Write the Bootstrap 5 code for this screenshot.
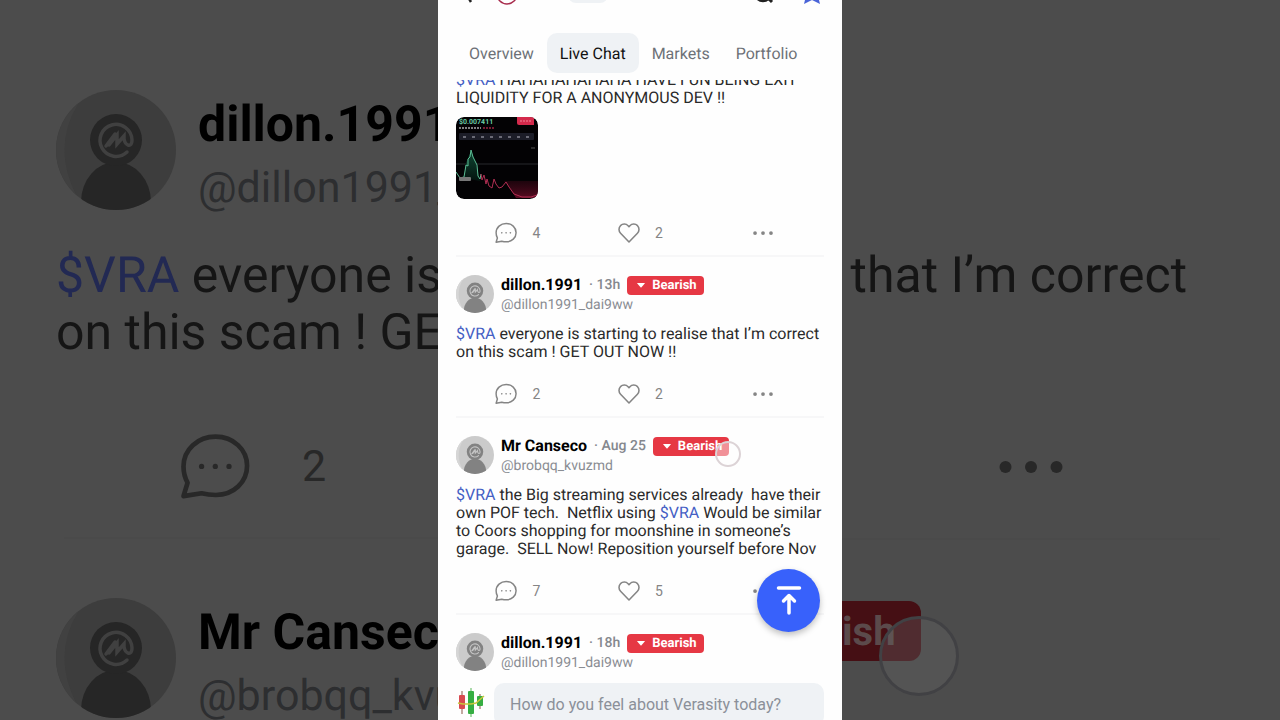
<!DOCTYPE html>
<html lang="en">
<head>
<meta charset="utf-8">
<meta name="viewport" content="width=device-width, initial-scale=1">
<title>Verasity – Live Chat</title>
<link href="https://cdn.jsdelivr.net/npm/bootstrap@5.3.0/dist/css/bootstrap.min.css" rel="stylesheet">
<style>
  body { font-family: Roboto, "Liberation Sans", sans-serif; text-rendering: geometricPrecision; background: #4c4c4c; --av-bg: #cbcbcb; --av-hi: #d6d6d6; --av-fg: #828282; --av-ring: #c4c4c4; }
  button { font-family: inherit; }
  a { text-decoration: none; }
  .stage { height: 100vh; grid-template-columns: minmax(0, 1fr) 404px minmax(0, 1fr); }

  /* phone */
  .phone { background: #fefefe; color: #2a2a2a; }
  .topbar { height: 5px; padding: 0 20px 0 24px; }
  .topbar svg { display: block; }
  .pill { width: 40px; height: 24px; margin-bottom: 2px; background: #eff2f5; border-radius: 8px; }
  .star { margin-left: 28px; }
  .tabs { margin-top: 28px; padding: 0 18px; }
  .tabs .nav-link { padding: 9px 13px 7px; line-height: 24px; color: #6d7177; border-radius: 10px; }
  .tabs .nav-link.active { background: #eff2f5; color: #111; }
  .feed { min-height: 0; margin-top: 7px; padding: 0 18px; }
  .feed-scroll { margin-top: -27px; }
  .post { padding: 18px 0 10px; border-bottom: 2px solid #f7f7f8; }
  .face { width: 38px; height: 38px; }
  .author { margin-left: 7px; margin-bottom: -2px; }
  .who { font-size: 16px; line-height: 20px; font-weight: 700; color: #000; }
  .when { font-size: 14px; line-height: 20px; font-weight: 500; color: #85888e; margin: 0 7px 0 7px; }
  .handle { font-size: 14px; line-height: 20px; color: #8a8d93; }
  .mood { height: 19px; padding: 0 7px 0 10px; gap: 7px; background: #e63844; border-radius: 4px; color: #fff; font-size: 13px; font-weight: 700; line-height: 19px; }
  .msg { font-size: 16px; line-height: 18px; white-space: pre-wrap; margin: 12px 0 21px; }
  .msg a { color: #4560c4; }
  .thumb { width: 82px; height: 82px; border-radius: 8px; margin: 10px 0 22px; }
  .acts button { height: 24px; color: #858585; font-size: 14px; line-height: 24px; gap: 14px; }
  .touch { width: 26px; height: 26px; right: -12px; top: 4px; border: 2px solid #dcd3d6; background: rgba(255,255,255,.45); }
  .fab { width: 63px; height: 63px; right: 22px; bottom: 88px; background: #3861fb; box-shadow: 0 3px 6px rgba(0,0,0,.25); }
  .composer { height: 40px; padding: 3px 18px 0 19px; gap: 8px; background: #fefefe; }
  .composer input { height: 43px; padding: 0 16px; border: 0; border-radius: 10px; background: #eff2f5; font-size: 16px; color: #222; }
  .composer input::placeholder { color: #8b9099; opacity: 1; }

  /* dimmed, enlarged side panels */
  .side { background: #4c4c4c; color: #151515; white-space: nowrap; --av-bg: #3d3d3d; --av-hi: #414141; --av-fg: #262626; --av-ring: #404040; }
  .side .face { width: 120px; height: 120px; }
  .side .author { margin: 2px 0 0 22px; }
  .side .who { font-size: 50px; line-height: 66px; }
  .side .handle { font-size: 43px; line-height: 60px; color: #2d2e30; }
  .side .msg { font-size: 50px; line-height: 57px; white-space: nowrap; margin: 30px 0 70px; }
  .side .msg a { color: #222953; }
  .side .rule { height: 2px; background: #4a4a4a; }
  .left { padding: 90px 0 0 56px; }
  .left .rule { margin: 35px 0 59px 8px; }
  .right { padding: 248px 60px 0 0; }
  .right .msg { margin: 0 33px 156px 0; }
  .right .rule { margin: 65px 0 61px; }
  .big-acts { height: 70px; padding-left: 123px; gap: 51px; color: #282828; font-size: 43px; }
  .big-mood { width: 79px; height: 60px; background: #450f14; color: #5b4a4b; border-radius: 0 12px 12px 0; font-size: 40px; font-weight: 700; line-height: 62px; }
  .big-touch { width: 80px; height: 80px; left: 37px; top: 15px; border: 3px solid #414144; background: rgba(100,100,100,.35); }
</style>
</head>
<body>
<svg width="0" height="0" class="position-absolute" aria-hidden="true">
  <symbol id="face" viewBox="0 0 120 120">
    <clipPath id="round"><circle cx="60" cy="60" r="60"/></clipPath>
    <g clip-path="url(#round)">
      <rect width="120" height="120" fill="var(--av-bg)"/>
      <path d="M22 14Q-6 60 24 112L-8 112V0Z" fill="var(--av-hi)"/>
      <ellipse cx="60" cy="112" rx="35" ry="40" fill="var(--av-fg)"/>
      <circle cx="60" cy="50" r="26" fill="var(--av-fg)"/>
    </g>
    <path d="M71 62A16 16 0 1 1 76 50Q76 56 72 55Q69 54 68 49V46L61 54V45L53 55M50 56L59 44" fill="none" stroke="var(--av-ring)" stroke-width="3.500" stroke-linecap="round"/>
  </symbol>
  <symbol id="chat" viewBox="0 0 24 24">
    <path d="M1.200 22L2.600 17.400Q1.200 14.800 1.200 11.800C1.200 6 6.100 1.600 12.200 1.600S23 6 23 11.600S18.400 21.600 12.300 21.600Q9.700 21.600 7.400 21Z" fill="none" stroke="currentColor" stroke-width="1.600" stroke-linejoin="round"/>
    <g fill="currentColor"><circle cx="7.400" cy="11.800" r=".9"/><circle cx="12.100" cy="11.800" r=".9"/><circle cx="16.800" cy="11.800" r=".9"/></g>
  </symbol>
  <symbol id="heart" viewBox="0 0 24 24">
    <path d="M12 21.800L2.800 12.300C.6 10 .5 6.300 2.700 4C5 1.700 8.800 1.700 11 4L12 5.200L13 4C15.200 1.700 19 1.700 21.300 4C23.500 6.300 23.400 10 21.200 12.300Z" fill="none" stroke="currentColor" stroke-width="1.700" stroke-linejoin="round"/>
  </symbol>
  <symbol id="dots" viewBox="0 0 64 12"><g fill="currentColor"><circle cx="6.500" cy="6" r="6"/><circle cx="32" cy="6" r="6"/><circle cx="57.500" cy="6" r="6"/></g></symbol>
  <symbol id="down" viewBox="0 0 8 5"><path d="M.5 0H7.500Q8 0 7.700.5L4.500 4.300Q4 4.800 3.500 4.300L.3.500Q0 0 .5 0Z" fill="#fff"/></symbol>
</svg>

<div class="stage d-grid overflow-hidden">
  <aside class="side left overflow-hidden">
    <div class="d-flex align-items-start">
      <svg class="face flex-shrink-0"><use href="#face"/></svg>
      <div class="author"><div class="who">dillon.1991</div><div class="handle">@dillon1991_dai9ww</div></div>
    </div>
    <p class="msg"><a href="#">$VRA</a> everyone is<br>on this scam ! GET</p>
    <div class="big-acts d-flex align-items-center">
      <svg width="72" height="70"><use href="#chat"/></svg><span>2</span>
    </div>
    <div class="rule"></div>
    <div class="d-flex align-items-start">
      <svg class="face flex-shrink-0"><use href="#face"/></svg>
      <div class="author"><div class="who">Mr Canseco</div><div class="handle">@brobqq_kvuzmd</div></div>
    </div>
  </aside>

  <main class="phone position-relative d-flex flex-column overflow-hidden">
    <header class="topbar d-flex align-items-end overflow-hidden flex-shrink-0">
      <svg width="20" height="20" viewBox="0 0 20 20"><path d="M17 7H3M3 7L9 17" fill="none" stroke="#222" stroke-width="2.500"/></svg>
      <svg class="ms-3" width="22" height="24" viewBox="0 0 22 24"><circle cx="9" cy="13" r="10" fill="none" stroke="#a82c4d" stroke-width="1.500"/></svg>
      <span class="pill ms-5"></span>
      <svg class="ms-auto" width="22" height="22" viewBox="0 0 22 22"><circle cx="11" cy="10" r="8" fill="none" stroke="#222" stroke-width="2.500"/><path d="M15 14L20 19" stroke="#222" stroke-width="3"/></svg>
      <svg class="star" width="20" height="20" viewBox="0 0 20 20"><path d="M10 0L13 7L20 7L16 11L18 19L10 15L2 19L4 11L0 7L7 7Z" fill="#4a64d8"/></svg>
    </header>
    <nav class="tabs nav flex-nowrap flex-shrink-0">
      <a class="nav-link" href="#">Overview</a>
      <a class="nav-link active" href="#" aria-current="page">Live Chat</a>
      <a class="nav-link" href="#">Markets</a>
      <a class="nav-link" href="#">Portfolio</a>
    </nav>

    <section class="feed flex-grow-1 overflow-hidden">
      <div class="feed-scroll">
        <article class="post">
          <p class="msg mt-0 mb-0"><a href="#">$VRA</a> HAHAHAHAHAHA HAVE FUN BEING EXIT LIQUIDITY FOR A ANONYMOUS DEV !!</p>
          <svg class="thumb d-block" viewBox="0 0 82 82" role="img" aria-label="Price chart">
            <defs><linearGradient id="loss" x1="0" y1="0" x2="0" y2="1"><stop offset="0" stop-color="#300613" stop-opacity="0.6"/><stop offset="1" stop-color="#5a0b22"/></linearGradient>
            <linearGradient id="gain" x1="0" y1="0" x2="0" y2="1"><stop offset="0" stop-color="#0f4632"/><stop offset="1" stop-color="#04140f"/></linearGradient></defs>
            <rect width="82" height="82" rx="8" fill="#030204"/>
            <text x="3" y="7" font-size="7" font-weight="700" fill="#69c9a3">$0.007411</text>
            <path d="M61 0H78V8H63Q61 8 61 6Z" fill="#d42a4c"/><path d="M64 4H76" stroke="#f08698" stroke-dasharray="2 1"/>
            <path d="M3 11H25" stroke="#aaa" stroke-width="1.500" stroke-dasharray="2 1"/><path d="M27 11H39" stroke="#9c2440" stroke-width="1.500" stroke-dasharray="2 1"/>
            <rect x="3" y="16" width="75" height="7" rx="1" fill="#1c1d28"/><path d="M7 20H76" stroke="#858591" stroke-width="1.500" stroke-dasharray="3 6"/>
            <path d="M0 47H82" stroke="#29292d"/><path d="M75 31H79" stroke="#555"/>
            <path d="M48 64H82V81H60L53 70Z" fill="url(#loss)"/>
            <path d="M8 61L10 46L15 34L20 46L24 64Z" fill="url(#gain)"/>
            <path d="M0 55L2 58L4 61L8 60L10 48L12 49L12 42L14 40L15 33L17 40L19 44L21 48L22 59L24 62L25 57" fill="none" stroke="#5bbd94"/>
            <path d="M25 57L26 63L28 58L30 67L31 62L33 69L36 71L38 62L40 67L43 71L46 70L50 65L53 70L58 77L66 80L75 80L81 78" fill="none" stroke="#b02e52"/>
            <rect x="3" y="60" width="12" height="4" rx="1" fill="#777"/>
          </svg>
          <div class="acts row g-0">
            <div class="col d-flex justify-content-center"><button class="btn p-0 border-0 d-flex align-items-center" aria-label="Comments 4"><svg width="24" height="22"><use href="#chat"/></svg>4</button></div>
            <div class="col d-flex justify-content-center"><button class="btn p-0 border-0 d-flex align-items-center" aria-label="Likes 2"><svg width="24" height="22"><use href="#heart"/></svg>2</button></div>
            <div class="col d-flex justify-content-center"><button class="btn p-0 border-0 d-flex align-items-center" aria-label="More"><svg width="20" height="4"><use href="#dots"/></svg></button></div>
          </div>
        </article>

        <article class="post">
          <div class="d-flex">
            <svg class="face flex-shrink-0"><use href="#face"/></svg>
            <div class="author"><div class="d-flex align-items-center"><span class="who">dillon.1991</span><span class="when">· 13h</span><span class="mood d-flex align-items-center"><svg width="8" height="5"><use href="#down"/></svg>Bearish</span></div><div class="handle">@dillon1991_dai9ww</div></div>
          </div>
          <p class="msg"><a href="#">$VRA</a> everyone is starting to realise that I’m correct on this scam ! GET OUT NOW !!</p>
          <div class="acts row g-0">
            <div class="col d-flex justify-content-center"><button class="btn p-0 border-0 d-flex align-items-center" aria-label="Comments 2"><svg width="24" height="22"><use href="#chat"/></svg>2</button></div>
            <div class="col d-flex justify-content-center"><button class="btn p-0 border-0 d-flex align-items-center" aria-label="Likes 2"><svg width="24" height="22"><use href="#heart"/></svg>2</button></div>
            <div class="col d-flex justify-content-center"><button class="btn p-0 border-0 d-flex align-items-center" aria-label="More"><svg width="20" height="4"><use href="#dots"/></svg></button></div>
          </div>
        </article>

        <article class="post">
          <div class="d-flex">
            <svg class="face flex-shrink-0"><use href="#face"/></svg>
            <div class="author"><div class="d-flex align-items-center"><span class="who">Mr Canseco</span><span class="when">· Aug 25</span><span class="mood d-flex align-items-center position-relative"><svg width="8" height="5"><use href="#down"/></svg>Bearish<span class="touch position-absolute rounded-circle"></span></span></div><div class="handle">@brobqq_kvuzmd</div></div>
          </div>
          <p class="msg"><a href="#">$VRA</a> the Big streaming services already  have their own POF tech.  Netflix using <a href="#">$VRA</a> Would be similar to Coors shopping for moonshine in someone’s garage.  SELL Now! Reposition yourself before Nov</p>
          <div class="acts row g-0">
            <div class="col d-flex justify-content-center"><button class="btn p-0 border-0 d-flex align-items-center" aria-label="Comments 7"><svg width="24" height="22"><use href="#chat"/></svg>7</button></div>
            <div class="col d-flex justify-content-center"><button class="btn p-0 border-0 d-flex align-items-center" aria-label="Likes 5"><svg width="24" height="22"><use href="#heart"/></svg>5</button></div>
            <div class="col d-flex justify-content-center"><button class="btn p-0 border-0 d-flex align-items-center" aria-label="More"><svg width="20" height="4"><use href="#dots"/></svg></button></div>
          </div>
        </article>

        <article class="post">
          <div class="d-flex">
            <svg class="face flex-shrink-0"><use href="#face"/></svg>
            <div class="author"><div class="d-flex align-items-center"><span class="who">dillon.1991</span><span class="when">· 18h</span><span class="mood d-flex align-items-center"><svg width="8" height="5"><use href="#down"/></svg>Bearish</span></div><div class="handle">@dillon1991_dai9ww</div></div>
          </div>
        </article>
      </div>
    </section>

    <form class="composer d-flex flex-shrink-0 overflow-hidden">
      <svg class="flex-shrink-0 mt-1" width="29" height="32" viewBox="0 0 29 32">
        <path d="M5 4V27M23 7V22" stroke="#8a5547" stroke-width="1"/><path d="M14 1V30" stroke="#54b554" stroke-width="1"/>
        <rect x="2" y="8" width="6" height="14" rx="1" fill="#d94a50"/><rect x="11" y="4" width="6" height="23" rx="1" fill="#36ad42"/><rect x="20" y="9" width="6" height="10" rx="1" fill="#36ad42"/>
        <path d="M1 16L6 17L14 17L19 16L27 9" fill="none" stroke="#c9c63c" stroke-width="1.500"/>
      </svg>
      <input class="form-control" type="text" aria-label="Your message" placeholder="How do you feel about Verasity today?">
    </form>

    <button class="fab btn p-0 border-0 rounded-circle position-absolute d-flex align-items-center justify-content-center" aria-label="Back to top">
      <svg width="28" height="32" viewBox="0 0 28 32" fill="none" stroke="#fff" stroke-width="3.500" stroke-linecap="round" stroke-linejoin="round"><path d="M3.500 3H24.500M14 28V11M8.500 16L14 10.500L19.500 16"/></svg>
    </button>
  </main>

  <aside class="side right overflow-hidden">
    <p class="msg text-end">that I’m correct</p>
    <div class="d-flex justify-content-center"><svg width="64" height="12" color="#282828"><use href="#dots"/></svg></div>
    <div class="rule"></div>
    <div class="big-mood position-relative">ish<span class="big-touch position-absolute rounded-circle"></span></div>
  </aside>
</div>
<script src="https://cdn.jsdelivr.net/npm/bootstrap@5.3.0/dist/js/bootstrap.bundle.min.js"></script>
</body>
</html>
